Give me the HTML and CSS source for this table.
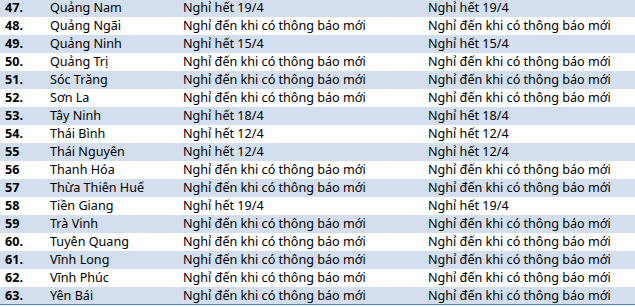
FILE: index.html
```html
<!DOCTYPE html>
<html lang="vi">
  <head>
    <meta charset="UTF-8" />
    <title>Lịch nghỉ học các tỉnh</title>
    <link rel="stylesheet" href="styles.css">
  </head>
  <body>
    <div class="table">
      <div class="row band"><div class="num">47.</div><div>Quảng Nam</div><div>Nghỉ hết 19/4</div><div>Nghỉ hết 19/4</div></div>
      <div class="row"><div class="num">48.</div><div>Quảng Ngãi</div><div>Nghỉ đến khi có thông báo mới</div><div>Nghỉ đến khi có thông báo mới</div></div>
      <div class="row band"><div class="num">49.</div><div>Quảng Ninh</div><div>Nghỉ hết 15/4</div><div>Nghỉ hết 15/4</div></div>
      <div class="row"><div class="num">50.</div><div>Quảng Trị</div><div>Nghỉ đến khi có thông báo mới</div><div>Nghỉ đến khi có thông báo mới</div></div>
      <div class="row band"><div class="num">51.</div><div>Sóc Trăng</div><div>Nghỉ đến khi có thông báo mới</div><div>Nghỉ đến khi có thông báo mới</div></div>
      <div class="row"><div class="num">52.</div><div>Sơn La</div><div>Nghỉ đến khi có thông báo mới</div><div>Nghỉ đến khi có thông báo mới</div></div>
      <div class="row band"><div class="num">53.</div><div>Tây Ninh</div><div>Nghỉ hết 18/4</div><div>Nghỉ hết 18/4</div></div>
      <div class="row"><div class="num">54.</div><div>Thái Bình</div><div>Nghỉ hết 12/4</div><div>Nghỉ hết 12/4</div></div>
      <div class="row band"><div class="num">55</div><div>Thái Nguyên</div><div>Nghỉ hết 12/4</div><div>Nghỉ hết 12/4</div></div>
      <div class="row"><div class="num">56</div><div>Thanh Hóa</div><div>Nghỉ đến khi có thông báo mới</div><div>Nghỉ đến khi có thông báo mới</div></div>
      <div class="row band"><div class="num">57</div><div>Thừa Thiên Huế</div><div>Nghỉ đến khi có thông báo mới</div><div>Nghỉ đến khi có thông báo mới</div></div>
      <div class="row"><div class="num">58</div><div>Tiền Giang</div><div>Nghỉ hết 19/4</div><div>Nghỉ hết 19/4</div></div>
      <div class="row band"><div class="num">59</div><div>Trà Vinh</div><div>Nghỉ đến khi có thông báo mới</div><div>Nghỉ đến khi có thông báo mới</div></div>
      <div class="row"><div class="num">60.</div><div>Tuyên Quang</div><div>Nghỉ đến khi có thông báo mới</div><div>Nghỉ đến khi có thông báo mới</div></div>
      <div class="row band"><div class="num">61.</div><div>Vĩnh Long</div><div>Nghỉ đến khi có thông báo mới</div><div>Nghỉ đến khi có thông báo mới</div></div>
      <div class="row"><div class="num">62.</div><div>Vĩnh Phúc</div><div>Nghỉ đến khi có thông báo mới</div><div>Nghỉ đến khi có thông báo mới</div></div>
      <div class="row band last"><div class="num">63.</div><div>Yên Bái</div><div>Nghỉ đến khi có thông báo mới</div><div>Nghỉ đến khi có thông báo mới</div></div>
    </div>
  </body>
</html>
```

FILE: styles.css
```css
body {
  margin: 0;
  background: #fff;
  font-family: "Noto Sans", sans-serif;
  font-size: 12.6px;
  color: #000;
}

.table {
  margin-top: -1px;
}

.row {
  display: grid;
  grid-template-columns: 45px 133px 245px 212px;
  height: 18px;
  box-sizing: border-box;
  align-items: end;
  line-height: 18px;
  white-space: nowrap;
}

.row > div {
  padding-left: 5px;
  overflow: hidden;
}

.band {
  background: #d3dfee;
}

.last {
  border-bottom: 1px solid #4f81bd;
  line-height: 17px;
}

.num {
  font-weight: bold;
}
```
